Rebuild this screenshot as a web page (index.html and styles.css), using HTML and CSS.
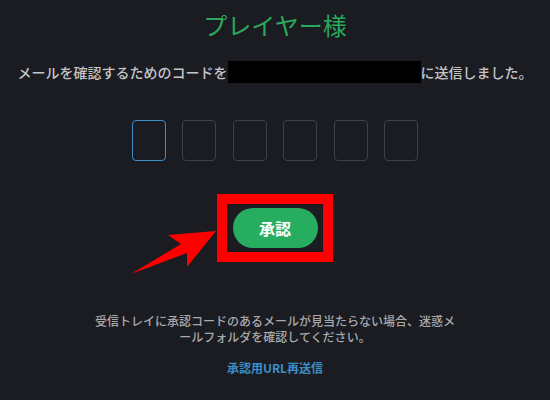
FILE: index.html
```html
<!DOCTYPE html>
<html lang="ja">
<head>
    <meta charset="UTF-8">
    <meta name="viewport" content="width=device-width, initial-scale=1.0">
    <title>承認コード</title>
    <link rel="stylesheet" href="styles.css">
</head>
<body>
    <div class="page">
        <h1 class="title">プレイヤー様</h1>
        <p class="message">メールを確認するためのコードを<span class="masked"></span>に送信しました。</p>

        <div class="code">
            <input type="text" maxlength="1" class="digit active">
            <input type="text" maxlength="1" class="digit">
            <input type="text" maxlength="1" class="digit">
            <input type="text" maxlength="1" class="digit">
            <input type="text" maxlength="1" class="digit">
            <input type="text" maxlength="1" class="digit">
        </div>

        <div class="highlight">
            <button class="confirm">承認</button>
        </div>

        <p class="note">受信トレイに承認コードのあるメールが見当たらない場合、迷惑メールフォルダを確認してください。</p>
        <a href="#" class="resend">承認用URL再送信</a>

        <!-- annotation arrow -->
        <svg class="arrow" viewBox="125 225 95 55" width="95" height="55">
            <polygon points="216,231 168,235 181,244 131,274 187,253 187,267" fill="#ff0000"/>
        </svg>
    </div>
</body>
</html>
```

FILE: styles.css
```css
body {
    margin: 0;
    background-color: #1b1c21;
    font-family: "Noto Sans CJK JP", "Noto Sans", sans-serif;
}
.page {
    position: relative;
    width: 550px;
    height: 400px;
    display: flex;
    flex-direction: column;
    align-items: center;
}
.title {
    margin: 10px 0 0;
    font-size: 24px;
    line-height: 30px;
    font-weight: 400;
    color: #2aa85b;
}
.message {
    margin: 21px 0 0;
    font-size: 14px;
    line-height: 22px;
    font-weight: 500;
    color: #c4c5c8;
    white-space: nowrap;
}
.masked {
    display: inline-block;
    width: 193px;
    height: 22px;
    background-color: #000;
    vertical-align: top;
}
.code {
    display: flex;
    gap: 16.6px;
    margin-top: 37px;
}
.digit {
    box-sizing: border-box;
    width: 34px;
    height: 41px;
    padding: 0;
    border: 1.5px solid #404146;
    border-radius: 4px;
    background-color: transparent;
    color: #fff;
    text-align: center;
    font-size: 20px;
    outline: none;
}
.digit.active {
    border-color: #3c8fc4;
}
.highlight {
    box-sizing: border-box;
    width: 116px;
    height: 68px;
    margin-top: 33px;
    border: 10px solid #ff0000;
    display: flex;
    justify-content: center;
    align-items: center;
}
.confirm {
    width: 85px;
    height: 40px;
    border: none;
    border-radius: 20px;
    background-color: #27ad5f;
    color: #fff;
    font-family: inherit;
    font-size: 16px;
    font-weight: 700;
    cursor: pointer;
}
.note {
    width: 366px;
    margin: 51px 0 0;
    font-size: 12px;
    line-height: 16px;
    font-weight: 500;
    color: #a9aaad;
    text-align: center;
}
.resend {
    margin-top: 15px;
    font-size: 12px;
    line-height: 16px;
    font-weight: 700;
    color: #3a8fc9;
    text-decoration: none;
}
.arrow {
    position: absolute;
    left: 125px;
    top: 225px;
}
```
